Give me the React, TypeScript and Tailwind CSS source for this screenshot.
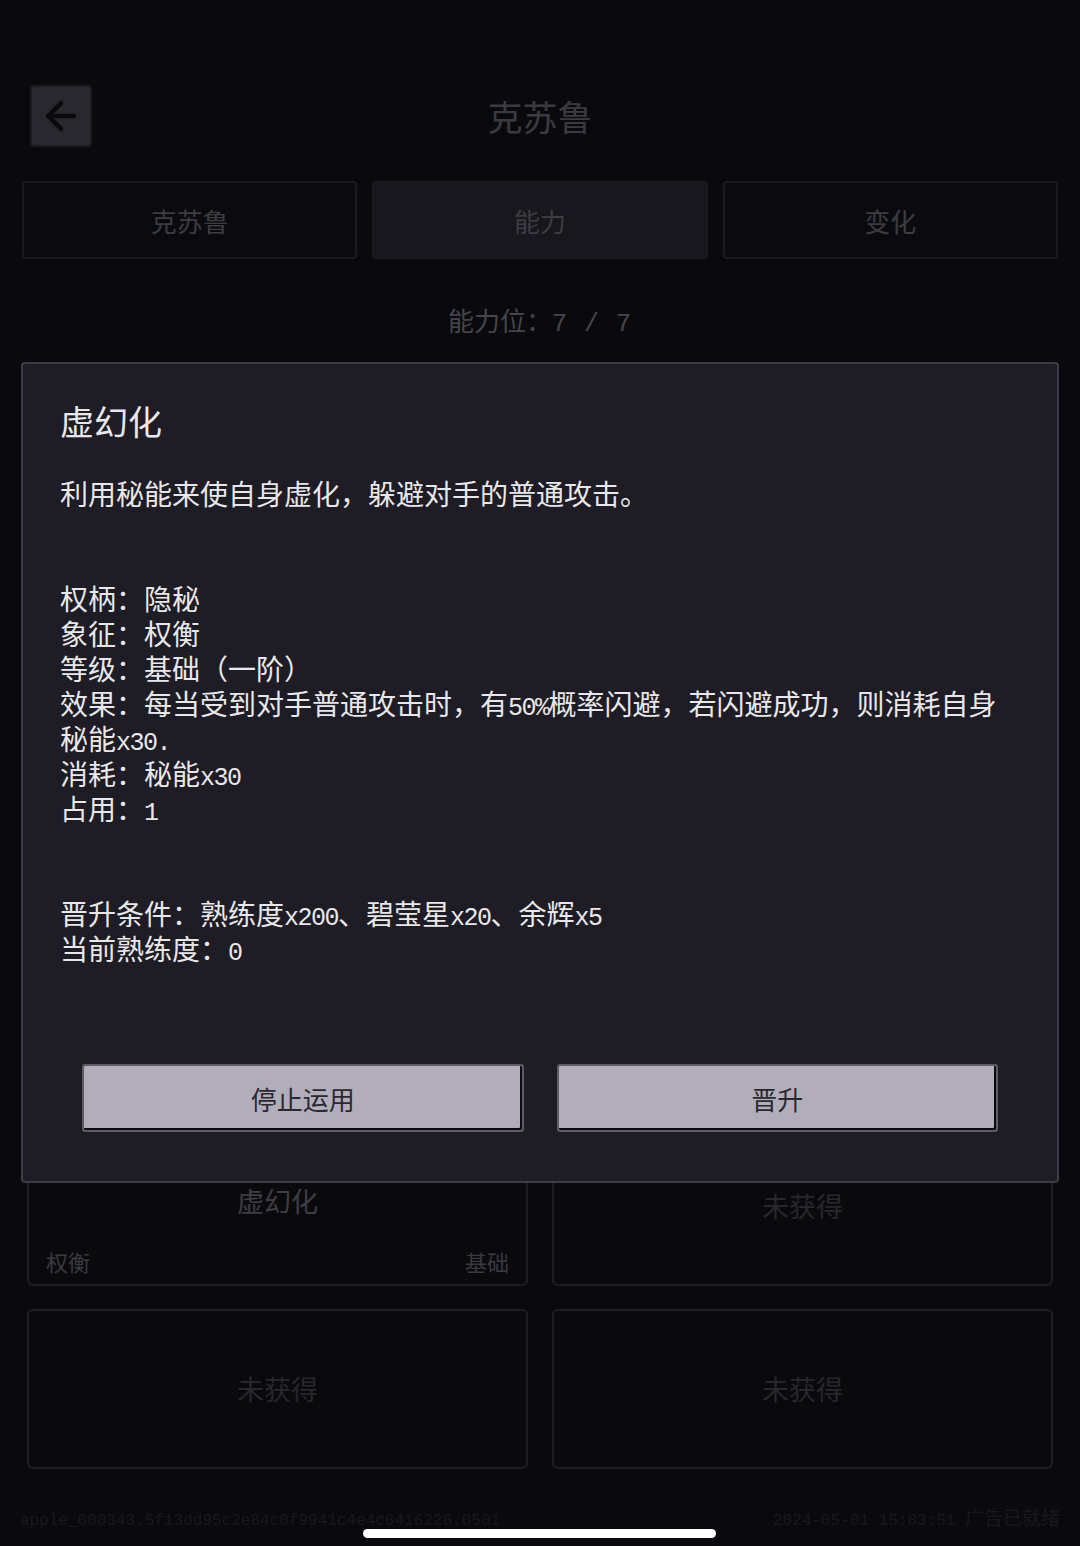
import React from "react";
import { ArrowLeft } from "lucide-react";

// Cartes d'aptitude sous la fenêtre modale
const cards = [
  null, null, null, null, null, null, null, null,
  { name: "虚幻化", symbol: "权衡", level: "基础" },
  null, null, null,
];

const En: React.FC<{ children: React.ReactNode }> = ({ children }) => (
  <span className="font-['Liberation_Mono',monospace] text-[25px] leading-none tracking-[-1.5px]">
    {children}
  </span>
);

const Line: React.FC<{ children: React.ReactNode }> = ({ children }) => (
  <div className="h-[35px] leading-[35px] whitespace-nowrap">{children}</div>
);

const App: React.FC = () => {
  return (
    <div className="relative flex h-[1546px] w-[1080px] flex-col overflow-hidden bg-[#0a0a0e] font-['Noto_Sans_CJK_SC',sans-serif]">
      {/* En-tête */}
      <div className="grid grid-cols-[62px_1fr_62px] items-center px-[30px] pt-[85px]">
        <div className="flex h-[62px] w-[62px] items-center justify-center rounded-[4px] border-2 border-[#1c1b21] bg-[#29282e]">
          <ArrowLeft className="h-[44px] w-[44px] text-[#0a0a0e]" strokeWidth={2.4} />
        </div>
        <div className="text-center text-[35px] leading-[44px] text-[#3b3a40]">克苏鲁</div>
        <div />
      </div>

      {/* Onglets */}
      <div className="mt-[34px] grid grid-cols-3 gap-[15px] px-[22px]">
        {["克苏鲁", "能力", "变化"].map((t, i) => (
          <div
            key={t}
            className={
              i === 1
                ? "flex h-[78px] items-center justify-center rounded-[4px] border-2 border-[#1b1a20] bg-[#18171d] text-[26px] text-[#3d3c43]"
                : "flex h-[78px] items-center justify-center rounded-[4px] border-2 border-[#1b1a20] bg-[#0b0b0f] text-[26px] text-[#3d3c43]"
            }
          >
            {t}
          </div>
        ))}
      </div>

      <div className="mt-[43px] text-center text-[26px] leading-[36px] text-[#46454b]">
        能力位：<span className="font-['Liberation_Mono',monospace] text-[25px] leading-none tracking-[1px]">7 / 7</span>
      </div>

      {/* Grille des aptitudes */}
      <div className="mt-[56px] grid grid-cols-2 gap-x-[24px] gap-y-[23px] px-[27px]">
        {cards.map((c, i) => (
          <div
            key={i}
            className="relative flex h-[160px] items-center justify-center rounded-[6px] border-2 border-[#1e1d24] bg-[#0a0a0d]"
          >
            {c ? (
              <>
                <span className="-mt-[10px] text-[27px] text-[#3e3d44]">{c.name}</span>
                <span className="absolute bottom-[6px] left-[17px] text-[22px] text-[#3a3940]">{c.symbol}</span>
                <span className="absolute bottom-[6px] right-[17px] text-[22px] text-[#3a3940]">{c.level}</span>
              </>
            ) : (
              <span className="text-[27px] text-[#28272d]">未获得</span>
            )}
          </div>
        ))}
      </div>

      {/* Pied de page */}
      <div className="mt-auto flex items-center justify-between px-[20px] pb-[14px] font-['Liberation_Mono','Noto_Sans_CJK_SC',monospace] text-[16px] leading-[22px] text-[#19181e]">
        <span>apple_000343.5f13dd95c2e84c0f9941c4e4c6416226.0501</span>
        <span>
          2024-05-01 15:03:51 <span className="text-[19px]">广告已就绪</span>
        </span>
      </div>

      {/* Fenêtre modale */}
      <div className="absolute left-[21px] top-[362px] flex h-[821px] w-[1038px] flex-col rounded-[4px] border-2 border-[#3d3b45] bg-[#1e1c24] px-[37px] pt-[35px] text-[28px] text-[#e8e8ea]">
        <div className="text-[34px] leading-[44px]">虚幻化</div>
        <div className="mt-[33px]">
          <Line>利用秘能来使自身虚化，躲避对手的普通攻击。</Line>
          <div className="h-[70px]" />
          <Line>权柄：隐秘</Line>
          <Line>象征：权衡</Line>
          <Line>等级：基础（一阶）</Line>
          <Line>效果：每当受到对手普通攻击时，有<En>50%</En>概率闪避，若闪避成功，则消耗自身</Line>
          <Line>秘能<En>x30.</En></Line>
          <Line>消耗：秘能<En>x30</En></Line>
          <Line>占用：<En>1</En></Line>
          <div className="h-[70px]" />
          <Line>晋升条件：熟练度<En>x200</En>、碧莹星<En>x20</En>、余辉<En>x5</En></Line>
          <Line>当前熟练度：<En>0</En></Line>
        </div>
        <div className="mt-[98px] flex gap-[33px] px-[22px]">
          {["停止运用", "晋升"].map((b) => (
            <div
              key={b}
              className="flex h-[68px] flex-1 items-center justify-center rounded-[3px] border-2 border-[#5e5b66] bg-[#b1aeba] text-[26px] text-[#2a2830] shadow-[inset_-2px_-2px_0_#0c0b10]"
            >
              {b}
            </div>
          ))}
        </div>
      </div>

      {/* Indicateur d'accueil */}
      <div className="absolute bottom-[8px] left-[363px] h-[9px] w-[353px] rounded-full bg-white" />
    </div>
  );
};

export default App;
